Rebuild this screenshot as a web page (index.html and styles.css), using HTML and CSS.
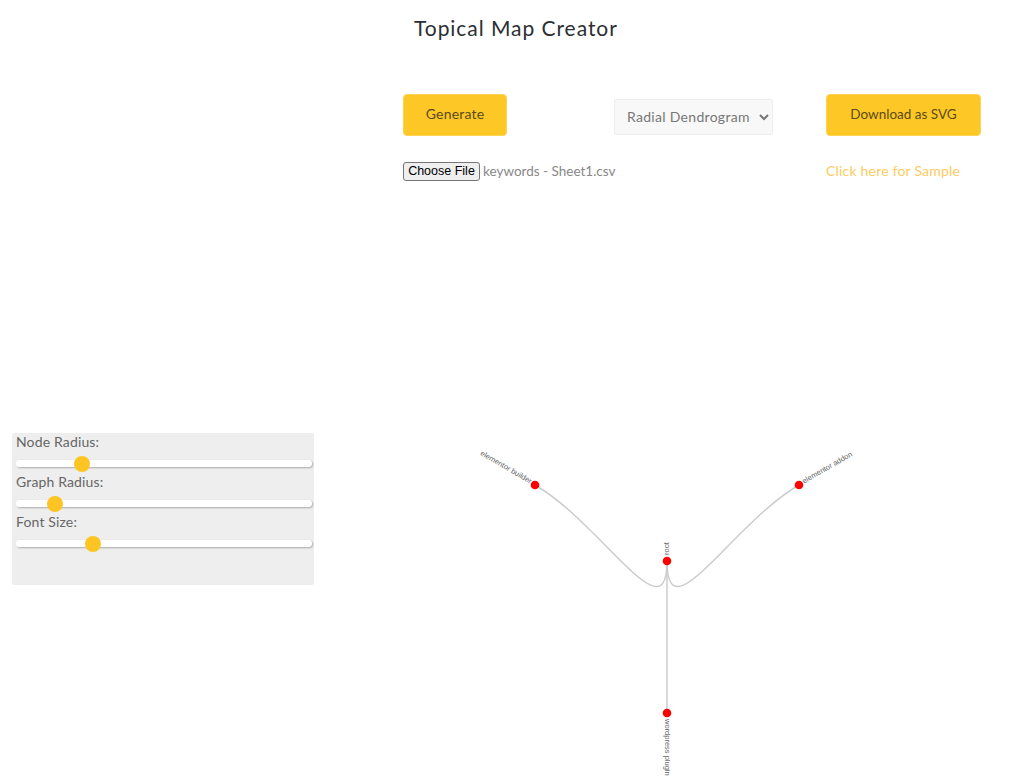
FILE: index.html
```html
<!DOCTYPE html>
<html lang="en">
<head>
    <meta charset="UTF-8">
    <meta name="viewport" content="width=device-width, initial-scale=1.0">
    <title>Topical Map Creator</title>
    <link rel="stylesheet" href="styles.css">
</head>
<body>
    <div class="page">
        <aside class="controls">
            <label class="control-label" for="node-radius">Node Radius:</label>
            <input class="slider" id="node-radius" type="range" min="0" max="280" value="58">
            <label class="control-label" for="graph-radius">Graph Radius:</label>
            <input class="slider" id="graph-radius" type="range" min="0" max="280" value="31">
            <label class="control-label" for="font-size">Font Size:</label>
            <input class="slider" id="font-size" type="range" min="0" max="280" value="69">
        </aside>
        <main class="main">
            <h1 class="title">Topical Map Creator</h1>
            <div class="toolbar">
                <button class="btn" type="button">Generate</button>
                <select class="layout-select">
                    <option>Radial Dendrogram</option>
                    <option>Tree</option>
                </select>
                <button class="btn btn-download" type="button">Download as SVG</button>
                <div class="file-field">
                    <button class="file-btn" type="button">Choose File</button>
                    <span class="file-name">keywords - Sheet1.csv</span>
                </div>
                <span></span>
                <a class="sample-link" href="#">Click here for Sample</a>
            </div>
            <svg class="map" width="621" height="574">
                <g transform="translate(264,355)">
                    <path class="link" d="M0,0C0,76,-66,-38,-132,-76"/>
                    <path class="link" d="M0,0C0,76,66,-38,132,-76"/>
                    <path class="link" d="M0,0L0,152"/>
                    <circle class="node" r="4.3"/>
                    <circle class="node" cx="-132" cy="-76" r="4.3"/>
                    <circle class="node" cx="132" cy="-76" r="4.3"/>
                    <circle class="node" cy="152" r="4.3"/>
                    <text class="node-label" transform="translate(0,-6) rotate(-90)">root</text>
                    <text class="node-label label-end" transform="translate(-136,-79) rotate(30)">elementor builder</text>
                    <text class="node-label" transform="translate(136,-79) rotate(-30)">elementor addon</text>
                    <text class="node-label" transform="translate(0,158) rotate(90)">wordpress plugin</text>
                </g>
            </svg>
        </main>
    </div>
</body>
</html>
```

FILE: styles.css
```css
body {
    margin: 0;
    background-color: #fff;
    font-family: "Lato", "Open Sans", sans-serif;
}

.page {
    display: flex;
    height: 780px;
    overflow: hidden;
}

/* left panel with the sliders */
.controls {
    box-sizing: border-box;
    width: 302px;
    height: 152px;
    flex-shrink: 0;
    margin: 433px 0 0 12px;
    padding: 0 2px 0 4px;
    background-color: #eee;
    border-radius: 2px;
}

.control-label {
    display: block;
    height: 19px;
    color: #666;
    font-size: 14px;
    line-height: 18px;
    letter-spacing: 0.15px;
}

.slider {
    display: block;
    box-sizing: border-box;
    width: 296px;
    height: 21px;
    margin: 0;
    padding-top: 2px;
    background: transparent;
    -webkit-appearance: none;
    appearance: none;
}

.slider::-webkit-slider-runnable-track {
    height: 7px;
    background-color: #fff;
    border-radius: 4px;
    box-shadow: 1px 1px 2px #aaa;
}

.slider::-webkit-slider-thumb {
    width: 16px;
    height: 16px;
    margin-top: -4px;
    background-color: #fdc524;
    border-radius: 50%;
    -webkit-appearance: none;
}

.main {
    width: 621px;
    margin-left: 89px;
}

.title {
    height: 94px;
    margin: 0 0 0 11px;
    padding-top: 15px;
    box-sizing: border-box;
    color: #2b2f33;
    font-size: 21px;
    font-weight: 400;
    line-height: 26px;
    letter-spacing: 0.95px;
}

.toolbar {
    display: grid;
    grid-template-columns: 211px 212px 155px;
    grid-template-rows: 42px 70px;
    align-items: center;
}

.btn {
    width: 104px;
    height: 42px;
    padding: 0 0 4px;
    color: #5b4a1c;
    background-color: #fdc825;
    border: 1px solid #fdd255;
    border-radius: 4px;
    font-family: inherit;
    font-size: 14px;
    letter-spacing: 0.2px;
}

.btn-download {
    width: 155px;
    padding-bottom: 3px;
    font-size: 13.5px;
    letter-spacing: 0;
}

.layout-select {
    width: 159px;
    height: 36px;
    margin-top: 3px;
    padding-left: 8px;
    color: #777;
    background-color: #f8f8f8;
    border: 1px solid #eee;
    border-radius: 2px;
    font-family: inherit;
    font-size: 14px;
    letter-spacing: 0.3px;
}

.file-field {
    display: flex;
    align-items: center;
    gap: 3px;
    white-space: nowrap;
}

.file-btn {
    flex-shrink: 0;
    width: 77px;
    height: 19px;
    padding: 0;
    color: #000;
    background-color: #efefef;
    border: 1px solid #767676;
    border-radius: 3px;
    font-family: "Liberation Sans", sans-serif;
    font-size: 12.5px;
}

.file-name {
    flex-shrink: 0;
    color: #888;
    font-size: 13.5px;
    letter-spacing: 0;
}

.sample-link {
    margin-bottom: 2px;
    color: #fdcb5e;
    font-size: 14px;
    letter-spacing: 0.2px;
    text-decoration: none;
    white-space: nowrap;
}

.map {
    display: block;
}

.link {
    fill: none;
    stroke: #ccc;
    stroke-width: 1.5px;
}

.node {
    fill: #f00;
}

.node-label {
    fill: #666;
    font-family: "Liberation Sans", sans-serif;
    font-size: 7.5px;
    dominant-baseline: middle;
}

.label-end {
    text-anchor: end;
}
```
